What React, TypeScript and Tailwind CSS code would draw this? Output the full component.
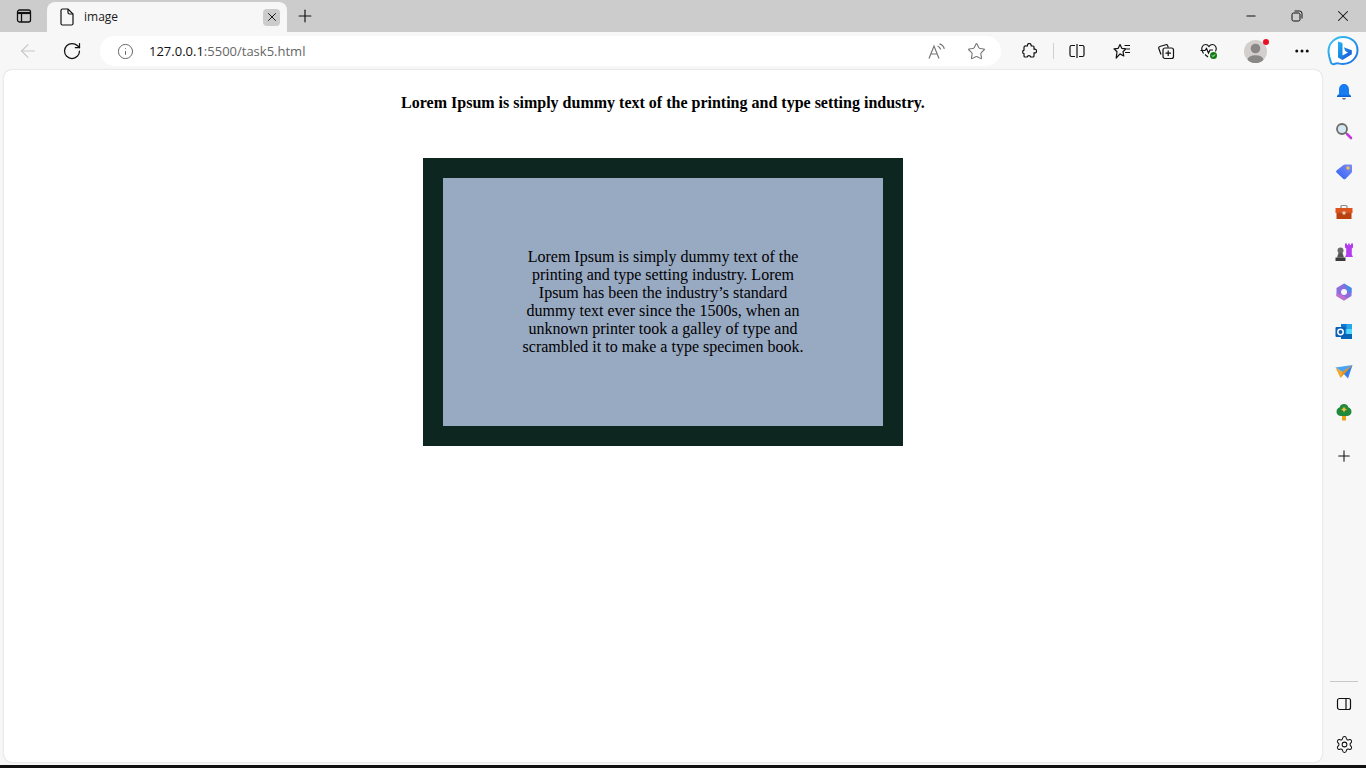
import { Plus, X, Minus, RotateCw, ArrowLeft, Info, Star, Ellipsis, Settings } from "lucide-react";

// toolbar icons that lucide does not have in the right shape
function TabsIcon() {
  return (
    <svg width="16" height="16" viewBox="0 0 16 16" fill="none" stroke="#111" strokeWidth="1.3">
      <rect x="1.500" y="2" width="13" height="12" rx="2" />
      <path d="M2 5h12" strokeWidth="2.200" />
      <path d="M5.500 5v9" />
    </svg>
  );
}

function PageIcon() {
  return (
    <svg width="14" height="18" viewBox="0 0 14 18" fill="none" stroke="#111" strokeWidth="1.200">
      <path d="M2.500 1h5.500l5 5v9.500a1.500 1.500 0 0 1-1.500 1.500h-9A1.500 1.500 0 0 1 1 15.500v-13A1.500 1.500 0 0 1 2.500 1z" />
      <path d="M8 1v3.500A1.500 1.500 0 0 0 9.500 6H13" />
    </svg>
  );
}

function RestoreIcon() {
  return (
    <svg width="12" height="12" viewBox="0 0 12 12" fill="none" stroke="#111" strokeWidth="1">
      <rect x="1" y="3" width="8" height="8" rx="1.500" />
      <path d="M3.500 1h5a2.500 2.500 0 0 1 2.500 2.500v5" />
    </svg>
  );
}

function ReadAloudIcon() {
  return (
    <svg width="18" height="16" viewBox="0 0 18 16" fill="none" stroke="#777" strokeWidth="1.200">
      <path d="M1 15.500 6 3l5 12.500M2.800 11h6.400" />
      <path d="M9.500 3c1.500.5 2.700 1.700 3.200 3.500M11.500.8c2.300.6 4.200 2.500 4.800 5" />
    </svg>
  );
}

function ExtensionsIcon() {
  return (
    <svg width="16" height="16" viewBox="0 0 16 16" fill="none" stroke="#111" strokeWidth="1.200" strokeLinejoin="round">
      <path d="M5 3h1.500a1.900 1.900 0 1 1 3.600 0H12a1 1 0 0 1 1 1v2.300a1.900 1.900 0 1 1 0 3.500V13a1 1 0 0 1-1 1H9.700a1.800 1.800 0 0 0-3.500 0H4a1 1 0 0 1-1-1v-2.300a1.800 1.800 0 0 1 0-3.500V4.500A1.500 1.500 0 0 1 5 3z" />
    </svg>
  );
}

function SplitIcon() {
  return (
    <svg width="16" height="16" viewBox="0 0 16 16" fill="none" stroke="#111" strokeWidth="1.200">
      <path d="M6 2.500H2.500A1.500 1.500 0 0 0 1 4v8a1.500 1.500 0 0 0 1.500 1.500H6M10 2.500h3.500A1.500 1.500 0 0 1 15 4v8a1.500 1.500 0 0 1-1.500 1.500H10M8 1v14" />
    </svg>
  );
}

function FavoritesIcon() {
  return (
    <svg width="18" height="18" viewBox="0 0 18 18" fill="none" stroke="#111" strokeWidth="1.200" strokeLinejoin="round">
      <path d="M7 2.500 8.800 6.300l4.200.5-3 2.900.8 4.300L7 11.900l-3.800 4.100.8-6.300-3-2.900 4.200-.5z" />
      <path d="M11.500 3.500H17M13.500 7H17M12 10.500h5" />
    </svg>
  );
}

function CollectionsIcon() {
  return (
    <svg width="18" height="18" viewBox="0 0 18 18" fill="none" stroke="#111" strokeWidth="1.200">
      <path d="M4 12.500 1.800 6.500a1.500 1.500 0 0 1 1-2l6-1.800a1.500 1.500 0 0 1 1.900 1L11.300 5.500" />
      <rect x="6" y="6" width="10.500" height="10.500" rx="2" />
      <path d="M11.200 8.500V14M8.500 11.200H14" />
    </svg>
  );
}

function HealthIcon() {
  return (
    <svg width="18" height="18" viewBox="0 0 18 18" fill="none">
      <path d="M3.500 11.500 2.500 9.500C.5 6.500 2.500 2.500 5.500 2.500c1.500 0 2.700.8 3.500 2 .8-1.200 2-2 3.500-2 3 0 5 4 3 7" stroke="#111" strokeWidth="1.200" />
      <path d="M.5 8.500H5l1.500-2 2 4.500 1.500-3h3" stroke="#111" strokeWidth="1.200" />
      <path d="M5 12.500 8 15" stroke="#111" strokeWidth="1.200" />
      <circle cx="13.500" cy="13.500" r="3.500" fill="#107c10" />
      <path d="m12 13.500 1 1 2-2" stroke="#fff" strokeWidth="1" />
    </svg>
  );
}

function ProfileIcon() {
  return (
    <div className="relative h-[23px] w-[23px]">
      <svg width="23" height="23" viewBox="0 0 23 23">
        <clipPath id="avatar-clip">
          <circle cx="11.500" cy="11.500" r="11.500" />
        </clipPath>
        <circle cx="11.500" cy="11.500" r="11.500" fill="#d2cfcd" />
        <g clipPath="url(#avatar-clip)" fill="#8a8886">
          <circle cx="11.500" cy="8.500" r="4.800" />
          <ellipse cx="11.500" cy="20" rx="8" ry="4.800" />
        </g>
      </svg>
      <div className="absolute right-[-2px] top-[-1px] h-[6px] w-[6px] rounded-full bg-[#e81123]" />
    </div>
  );
}

function BingIcon() {
  return (
    <svg width="32" height="33" viewBox="0 0 32 33">
      <defs>
        <linearGradient id="bing-ring" x1="0" y1="0" x2="1" y2="1">
          <stop offset="0" stopColor="#38c6f4" />
          <stop offset="1" stopColor="#1b6fe0" />
        </linearGradient>
        <linearGradient id="bing-b" x1="0" y1="0" x2="1" y2="1">
          <stop offset="0" stopColor="#1fb6ef" />
          <stop offset="1" stopColor="#1a4fd8" />
        </linearGradient>
      </defs>
      <path d="M16 2C8 2 1.500 8.300 1.500 16c0 3.800 1.300 8 2.300 11 .5 1.800 2 2.600 3.500 2 1.500-.6 3-.9 5-.4 1 .3 2.300.4 3.700.4 8 0 14.500-6.300 14.500-14S24 2 16 2z" fill="#fff" stroke="url(#bing-ring)" strokeWidth="2" />
      <path d="M11 6.500 15.500 8v12.500l5.500-3-2.500-1.200-1.700-4 8 3v4L15.500 25 11 22.500z" fill="url(#bing-b)" />
    </svg>
  );
}

function BellIcon() {
  return (
    <svg width="16" height="18" viewBox="0 0 16 18">
      <path d="M8 1C4.800 1 3 3.500 3 6.500v4L1 13.500h14l-2-3v-4C13 3.500 11.200 1 8 1z" fill="#1a7cf2" />
      <path d="M1 12.500h14V14H1z" fill="#0f5fd0" />
      <path d="M6 15h4l-1 1.500H7z" fill="#6b6b6b" />
    </svg>
  );
}

function SearchIcon() {
  return (
    <svg width="18" height="18" viewBox="0 0 18 18" fill="none" className="-translate-y-px">
      <circle cx="7" cy="7" r="5" fill="#d5e6f0" stroke="#6b6b6b" strokeWidth="1.800" />
      <path d="m11 11 1.500 1.500" stroke="#6b6b6b" strokeWidth="2" />
      <path d="m12.500 12.500 3.500 3.500" stroke="#c239e0" strokeWidth="2.600" strokeLinecap="round" />
    </svg>
  );
}

function TagIcon() {
  return (
    <svg width="18" height="18" viewBox="0 0 18 18">
      <defs>
        <linearGradient id="tag-fill" x1="0" y1="1" x2="1" y2="0">
          <stop offset="0" stopColor="#2f62f5" />
          <stop offset="1" stopColor="#7f8cf7" />
        </linearGradient>
      </defs>
      <path d="M10 1.500h6a1 1 0 0 1 1 1v6a2 2 0 0 1-.6 1.400l-6 6a1.500 1.500 0 0 1-2 0L1.500 9.500a1.500 1.500 0 0 1 0-2l7-5.500a2 2 0 0 1 1.500-.5z" fill="url(#tag-fill)" />
      <circle cx="13" cy="5" r="1.700" fill="#f5c242" />
    </svg>
  );
}

function ToolboxIcon() {
  return (
    <svg width="18" height="16" viewBox="0 0 18 16" fill="none">
      <path d="M6 4V2.500a1 1 0 0 1 1-1h4a1 1 0 0 1 1 1V4" stroke="#8a8a8a" strokeWidth="1.200" />
      <rect x=".5" y="4" width="17" height="5" fill="#d9541e" />
      <rect x="1.500" y="9" width="15" height="6" fill="#b8410f" />
      <rect x="7.500" y="7.500" width="3" height="3" fill="#e0d4c8" />
    </svg>
  );
}

function GamesIcon() {
  return (
    <svg width="18" height="18" viewBox="0 0 18 18">
      <path d="M10 .5h2V2h1.200V.5h1.600V2H16V.5h2v4l-1.200 1v6l1.200 2.500h-8l1.200-2.500v-6L10 4.500z" fill="#b43df0" />
      <circle cx="5.500" cy="7.500" r="3" fill="#6a6a6a" />
      <path d="M3.500 10h4l1.500 4.500H2z" fill="#555" />
      <path d="M.5 14.500h10V18H.5z" fill="#3a3a3a" />
    </svg>
  );
}

function M365Icon() {
  return (
    <svg width="18" height="18" viewBox="0 0 18 18">
      <path d="M9 .5 16.500 5v8L9 17.500 1.500 13V5z" fill="#8a6ee0" />
      <path d="M9 .5 16.500 5v5.500l-4.500-3V5z" fill="#3f8ee8" />
      <path d="M1.500 10.500V13L9 17.500l3.500-2-6.500-4z" fill="#c46fd0" />
      <circle cx="9" cy="9" r="3" fill="#f7f7f7" />
    </svg>
  );
}

function OutlookIcon() {
  return (
    <svg width="18" height="18" viewBox="0 0 18 18">
      <path d="M6 1h11v15H6z" fill="#28a8ea" />
      <path d="M6 1h5.500v5H6z" fill="#0f78d4" />
      <path d="M11.500 6H17v5h-5.500z" fill="#50d9ff" />
      <path d="M6 11h11v5H6z" fill="#0364b8" />
      <rect x=".5" y="4" width="10" height="10" rx="1" fill="#0a5fb4" />
      <circle cx="5.500" cy="9" r="2.700" fill="none" stroke="#fff" strokeWidth="1.500" />
    </svg>
  );
}

function SendIcon() {
  return (
    <svg width="18" height="16" viewBox="0 0 18 16">
      <path d="M.5 3.500 17.500 1 7 8z" fill="#4aa4f5" />
      <path d="M17.500 1 13 14.500 7 8z" fill="#2f80ed" />
      <path d="M.5 3.500 7 8l-1.500 6z" fill="#f5a623" />
      <path d="M17.500 1 5.500 14 7 8z" fill="#e8911c" />
    </svg>
  );
}

function TreeIcon() {
  return (
    <svg width="16" height="18" viewBox="0 0 16 18">
      <rect x="6" y="12" width="4" height="5.500" fill="#e8a317" />
      <path d="M8 1c2.500 0 4 1.500 4.300 3.300C14.300 5 15.500 6.700 15.500 8.800c0 2.500-2 4.200-4.500 4.200H5C2.500 13 .5 11.300.5 8.800.5 6.700 1.700 5 3.700 4.300 4 2.500 5.500 1 8 1z" fill="#1f8a3b" />
      <path d="M8 3.500 9 5.500l2 1-2 1-1 2-1-2-2-1 2-1z" fill="#f5c242" />
    </svg>
  );
}

function PanelIcon() {
  return (
    <svg width="16" height="16" viewBox="0 0 16 16" fill="none" stroke="#111" strokeWidth="1.200">
      <rect x="1.500" y="2.500" width="13" height="11" rx="2" />
      <path d="M10 2.500v11" />
    </svg>
  );
}

const sideIcons = [
  <BellIcon />,
  <SearchIcon />,
  <TagIcon />,
  <ToolboxIcon />,
  <GamesIcon />,
  <M365Icon />,
  <OutlookIcon />,
  <SendIcon />,
  <TreeIcon />,
];

export default function App() {
  return (
    <div className="flex h-screen w-full flex-col overflow-hidden bg-[#f7f7f7] font-['Open_Sans','Liberation_Sans',sans-serif]">
      {/* tab strip */}
      <div className="flex h-8 shrink-0 items-end bg-[#cccccc]">
        <div className="flex h-[30px] w-[47px] items-center justify-center pb-[2px]">
          <TabsIcon />
        </div>
        <div className="flex h-[30px] w-[240px] items-center rounded-t-lg bg-[#f7f7f7] pl-[13px] pr-[7px]">
          <PageIcon />
          <span className="ml-[10px] flex-1 text-xs text-[#1a1a1a]">image</span>
          <div className="flex h-[17px] w-[17px] items-center justify-center rounded-sm bg-[#cccccc]">
            <X size={14} color="#111" strokeWidth={1.6} />
          </div>
        </div>
        <div className="flex h-[30px] w-[36px] items-center justify-center pb-[2px]">
          <Plus size={20} color="#111" strokeWidth={1.4} />
        </div>
        <div className="ml-auto flex h-8 items-center">
          <div className="flex w-[46px] justify-center">
            <Minus size={14} color="#111" strokeWidth={1.8} />
          </div>
          <div className="flex w-[46px] justify-center">
            <RestoreIcon />
          </div>
          <div className="flex w-[46px] justify-center">
            <X size={18} color="#111" strokeWidth={1.4} />
          </div>
        </div>
      </div>

      {/* toolbar */}
      <div className="flex h-[38px] shrink-0 items-center">
        <div className="flex w-[56px] justify-center">
          <ArrowLeft size={22} color="#c8c8c8" strokeWidth={1.3} />
        </div>
        <div className="flex w-[32px] justify-center">
          <RotateCw size={20} color="#111" strokeWidth={1.5} />
        </div>
        <div className="ml-[12px] flex h-[30px] w-[901px] items-center rounded-full bg-white pl-[17px]">
          <Info size={17} color="#666" strokeWidth={1.4} />
          <span className="ml-[15px] flex-1 pt-[1px] text-[13px] text-[#111]">
            127.0.0.1<span className="text-[#666]">:5500/task5.html</span>
          </span>
          <div className="flex w-[36px] justify-center pl-[4px]">
            <ReadAloudIcon />
          </div>
          <div className="ml-[1px] mr-[3px] flex w-[44px] justify-center">
            <Star size={19} color="#777" strokeWidth={1.4} />
          </div>
        </div>
        <div className="ml-[17px] flex w-[22px] justify-center">
          <ExtensionsIcon />
        </div>
        <div className="ml-[13px] mr-[12px] h-[16px] w-px bg-[#d0d0d0]" />
        <div className="flex w-[22px] justify-center">
          <SplitIcon />
        </div>
        <div className="ml-[23px] flex w-[22px] justify-center">
          <FavoritesIcon />
        </div>
        <div className="ml-[22px] flex w-[22px] justify-center">
          <CollectionsIcon />
        </div>
        <div className="ml-[21px] flex w-[22px] justify-center">
          <HealthIcon />
        </div>
        <div className="ml-[24px] flex w-[23px] justify-center">
          <ProfileIcon />
        </div>
        <div className="ml-[24px] flex w-[22px] justify-center">
          <Ellipsis size={18} color="#111" strokeWidth={2} />
        </div>
        <div className="ml-[14px]">
          <BingIcon />
        </div>
      </div>

      <div className="flex min-h-0 flex-1">
        {/* page */}
        <div className="mb-[3px] ml-1 flex w-[1318px] flex-col items-center rounded-lg bg-white font-['Liberation_Serif',serif] text-black shadow-[0_0_2px_rgba(0,0,0,0.2)]">
          <h1 className="mt-[24px] text-base leading-[18px] font-bold">
            Lorem Ipsum is simply dummy text of the printing and type setting industry.
          </h1>
          <div className="mt-[46px] flex h-[288px] w-[480px] items-center justify-center border-[20px] border-[#0d2620] bg-[#98a9c2]">
            <p className="w-[300px] text-center text-base leading-[18px]">
              Lorem Ipsum is simply dummy text of the printing and type setting industry. Lorem Ipsum has been the
              industry’s standard dummy text ever since the 1500s, when an unknown printer took a galley of type and
              scrambled it to make a type specimen book.
            </p>
          </div>
        </div>

        {/* sidebar */}
        <div className="flex w-[44px] flex-col items-center pt-[2px]">
          {sideIcons.map((icon, i) => (
            <div key={i} className="flex h-[40px] items-center justify-center">
              {icon}
            </div>
          ))}
          <div className="mt-[4px] flex h-[40px] items-center justify-center">
            <Plus size={18} color="#111" strokeWidth={1.4} />
          </div>
          <div className="mt-auto h-px w-[28px] bg-[#c8c8c8]" />
          <div className="mt-[14px]">
            <PanelIcon />
          </div>
          <div className="mb-[11px] mt-[23px]">
            <Settings size={19} color="#111" strokeWidth={1.3} />
          </div>
        </div>
      </div>

      <div className="h-[3px] shrink-0 bg-[#111111]" />
    </div>
  );
}
